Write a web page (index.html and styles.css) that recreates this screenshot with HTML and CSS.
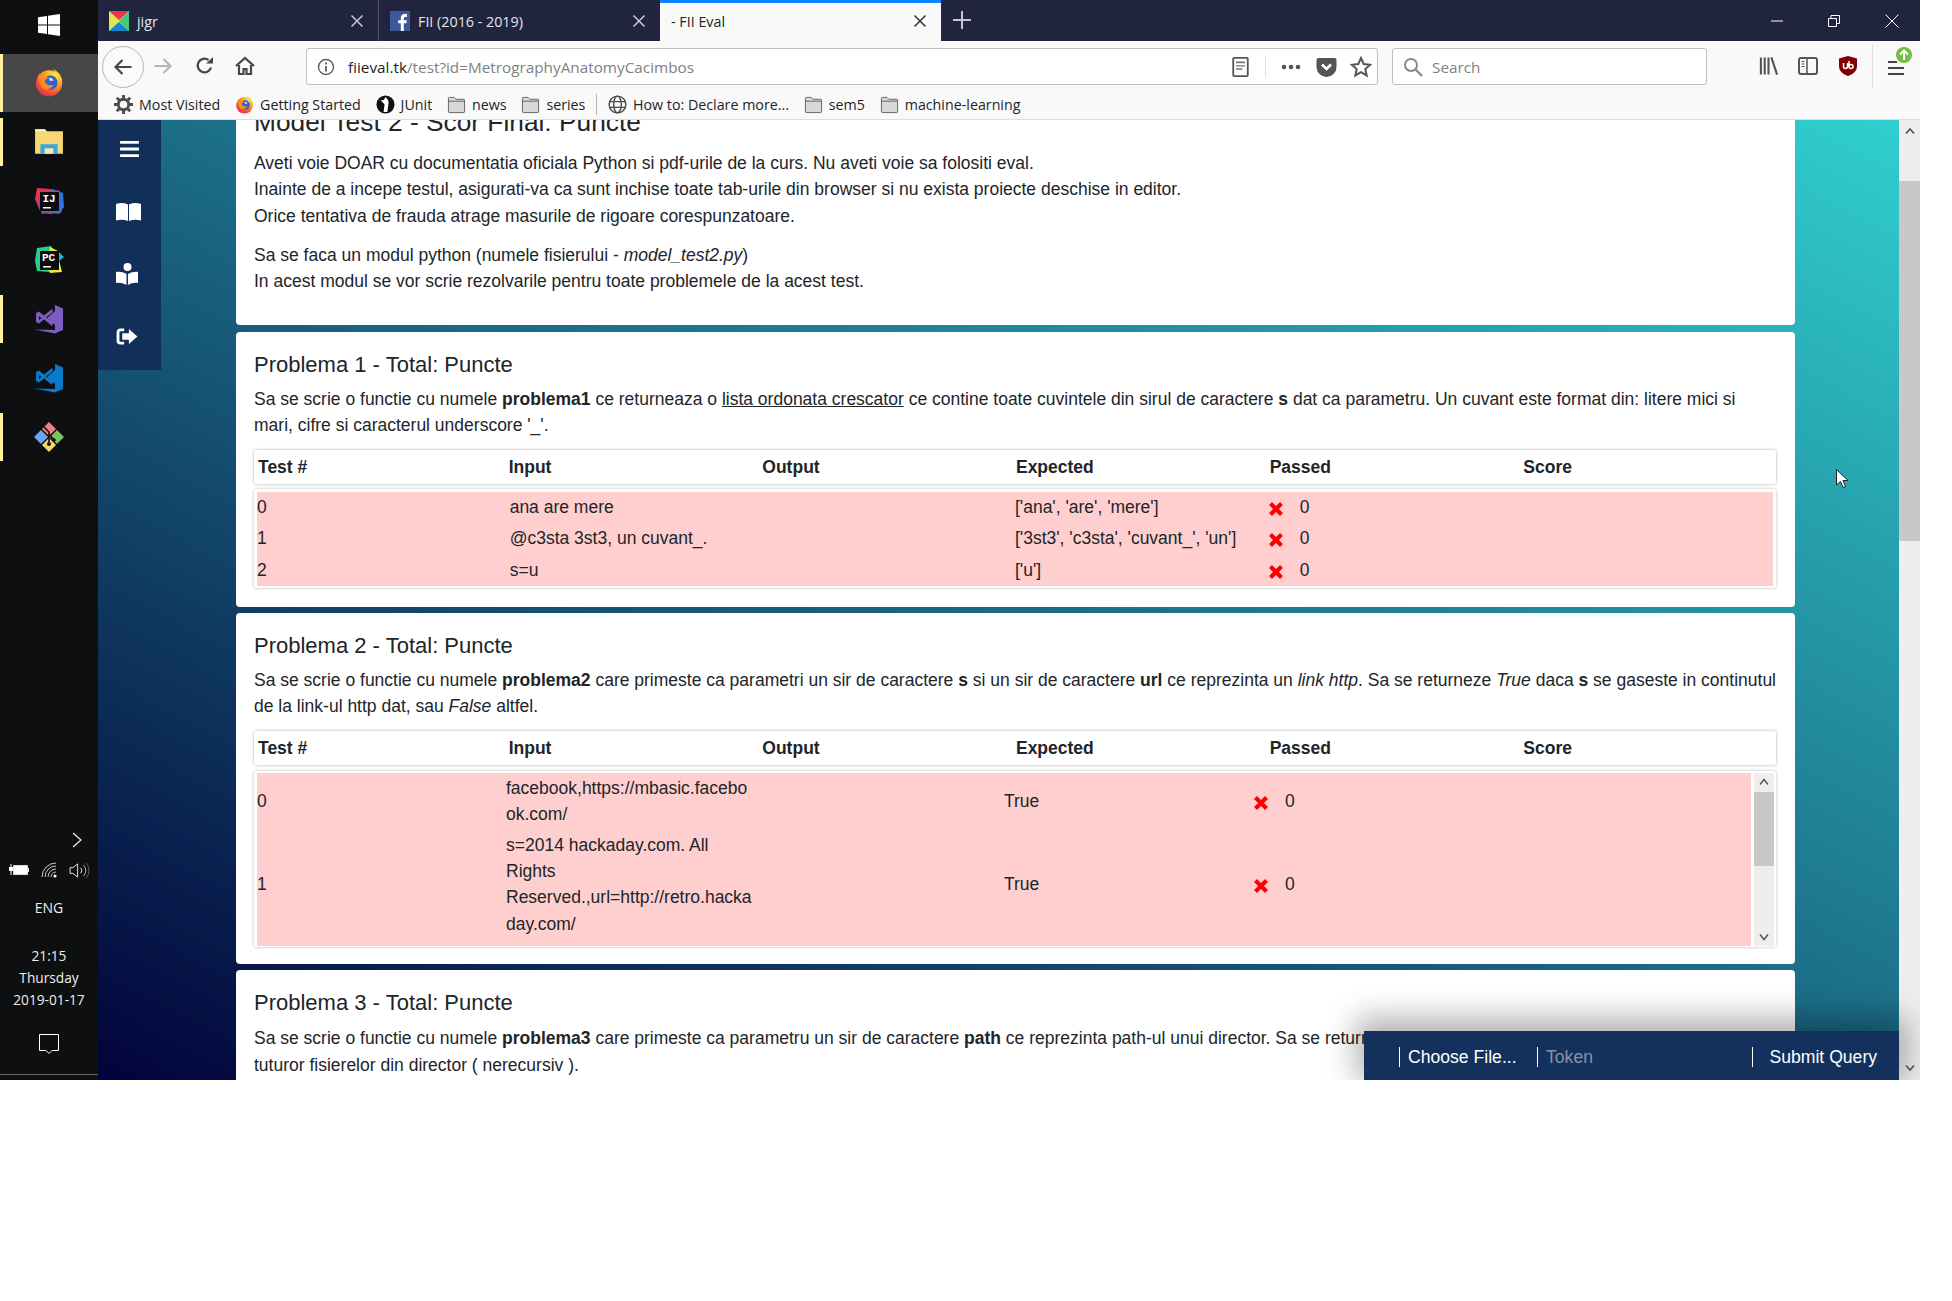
FILE: index.html
```html
<!DOCTYPE html>
<html lang="ro">
<head>
<meta charset="utf-8">
<title>FII Eval</title>
<link rel="stylesheet" href="styles.css">
</head>
<body>
<svg class="defs" width="0" height="0">
  <defs>
    <radialGradient id="ffg" cx="0.75" cy="0.15" r="1">
      <stop offset="0" stop-color="#ffe847"/>
      <stop offset="0.45" stop-color="#ff9a1f"/>
      <stop offset="0.8" stop-color="#f0413a"/>
      <stop offset="1" stop-color="#d92a6b"/>
    </radialGradient>
    <symbol id="firefox" viewBox="0 0 24 24">
      <circle cx="12" cy="13" r="10.5" fill="url(#ffg)"/>
      <path d="M15 1.5c5 2 8 6.500 7.500 12-1-5-4-8-7.500-12z" fill="#ffd02c"/>
      <circle cx="13" cy="12.500" r="5.800" fill="#2c62dd"/>
      <path d="M4 5c2 3 5 2 8 3.500-2 .5-3 1.500-3.500 3 1 2.500 4 4 7 2.500-1 3-4 4.500-7 3.500C5 16.500 3 11 4 5z" fill="#ff8a1e"/>
      <path d="M12 8.500c2 0 3.500 1 3.500 2.500h-3z" fill="#ffe9a8"/>
    </symbol>
    <symbol id="folder" viewBox="0 0 20 20">
      <path d="M1.500 17.500V3.500a1 1 0 0 1 1-1h5l2 2h8a1 1 0 0 1 1 1v12a1 1 0 0 1-1 1h-15a1 1 0 0 1-1-1z" fill="#d8d8d8" stroke="#616161" stroke-width="1"/>
      <path d="M1.500 6.500h17" stroke="#616161" stroke-width="1" fill="none"/>
    </symbol>
    <symbol id="cross" viewBox="0 0 16 16">
      <path d="M2.500 2.500l11 11M13.500 2.500l-11 11" stroke="#ff0000" stroke-width="4.200" fill="none"/>
    </symbol>
    <symbol id="tabclose" viewBox="0 0 14 14">
      <path d="M1.500 1.500l11 11M12.500 1.500l-11 11" stroke="currentColor" stroke-width="1.500" fill="none"/>
    </symbol>
  </defs>
</svg>

<div class="window">
  <aside class="taskbar">
    <div class="start">
      <svg class="ic-win" viewBox="0 0 22 22"><path d="M0 3.200l9-1.300v8.600H0zM10 1.800L22 0v10.500H10zM0 11.500h9v8.600l-9-1.300zM10 11.500h12V22l-12-1.800z" fill="#fff"/></svg>
    </div>
    <div class="tb-item tb-active"><svg class="ic-tb"><use href="#firefox"/></svg></div>
    <div class="tb-item tb-running">
      <svg class="ic-tb" viewBox="0 1 28 28"><path d="M1 3h9l2 2h15v21H1z" fill="#f7d774"/><path d="M1 3h9l2 2H1z" fill="#fff1b8"/><path d="M6 26v-9h16v9h-4v-5h-8v5z" fill="#3aa7e4"/><path d="M10 21h8v5h-8z" fill="#fbe7a4"/></svg>
    </div>
    <div class="tb-item">
      <svg class="ic-tb" viewBox="0 0 30 30"><path d="M3 2l13 1 10 2 3 12-2 10-12 1-9-3-5-12z" fill="#e5324f"/><path d="M18 3l11 4 1 14-5 7-9-2z" fill="#2f74e0"/><path d="M2 15l6 13 8-1-6-9z" fill="#8a4aa8"/><path d="M6 6h19v19H6z" fill="#0b0b0b"/><text class="ide-text" x="8.500" y="16">IJ</text><path d="M9 21h8v1.500H9z" fill="#fff"/></svg>
    </div>
    <div class="tb-item">
      <svg class="ic-tb" viewBox="0 0 30 30"><path d="M3 3l14-2 3 6-5 20-12-1-2-10z" fill="#23d18b"/><path d="M16 2l8 4 5 6-4 3 3 12-12 1-3-6z" fill="#f5e733"/><path d="M23 6l7 6-5 4z" fill="#18b4e8"/><path d="M6 6h19v19H6z" fill="#0b0b0b"/><text class="ide-text" x="8" y="16">PC</text><path d="M9 21h8v1.500H9z" fill="#fff"/></svg>
    </div>
    <div class="tb-item tb-running">
      <svg class="ic-tb" viewBox="0 0 30 30"><path d="M21 1l8 3.500v21.500l-8 3.500L0 25.500l21 .5z" fill="#7c5cbe"/><path d="M21 7v14l-8-7zM2 9l3-1.500 5 4 8-6.500 1 3-7 5.500 7 5.500-1 3-8-6.500-5 4-3-1.500zm3 3v4l2.500-2z" fill="#7c5cbe"/></svg>
    </div>
    <div class="tb-item">
      <svg class="ic-tb" viewBox="0 0 30 30"><path d="M21 1l8 3.500v21.500l-8 3.500L0 25.500l21 .5z" fill="#0b78c8"/><path d="M21 7v14l-8-7zM2 9l3-1.500 5 4 8-6.500 1 3-7 5.500 7 5.500-1 3-8-6.500-5 4-3-1.500zm3 3v4l2.500-2z" fill="#0b78c8"/></svg>
    </div>
    <div class="tb-item tb-running">
      <svg class="ic-tb" viewBox="0 0 30 30"><path d="M15 0l7 7-7 7-7-7z" fill="#f08080"/><path d="M7 8l7 7-7 7-7-7z" fill="#6fa3f7"/><path d="M23 8l7 7-7 7-7-7z" fill="#7cc35a"/><path d="M15 16l7 7-7 7-7-7z" fill="#f5d76e"/><path d="M10 5l5 5v10M15 12l5 6" stroke="#111" stroke-width="1.600" fill="none"/><circle cx="15" cy="22" r="2" fill="#111"/><circle cx="20" cy="18" r="1.800" fill="#111"/></svg>
    </div>

    <div class="tray">
      <svg class="ic-chev" viewBox="0 0 10 16"><path d="M1 1l8 7-8 7" stroke="#eee" stroke-width="1.200" fill="none"/></svg>
      <div class="tray-icons">
        <svg class="ic-batt" viewBox="0 0 20 12"><path d="M4.500 1.500h14v9h-14z" fill="#fff" stroke="#ddd"/><path d="M19 4h1v4h-1z" fill="#fff"/><path d="M0 3h4v4H0zM1.500 0h1v3h-1zM1.500 7h1v4h-1z" fill="#fff"/></svg>
        <svg class="ic-wifi" viewBox="0 0 16 16"><g stroke="#ccc" fill="none"><path d="M1 15A14 14 0 0 1 15 1"/><path d="M4 15A11 11 0 0 1 15 4"/><path d="M7 15a8 8 0 0 1 8-8"/><path d="M10 15a5 5 0 0 1 5-5"/></g><circle cx="14" cy="14" r="1.600" fill="#fff"/></svg>
        <svg class="ic-vol" viewBox="0 0 22 18"><path d="M1 6h3l5-4v14l-5-4H1z" fill="none" stroke="#eee"/><path d="M12 6a4 4 0 0 1 0 6" fill="none" stroke="#eee"/><path d="M15 3a8 8 0 0 1 0 12" fill="none" stroke="#bbb"/><path d="M18 1a12 12 0 0 1 0 16" fill="none" stroke="#666"/></svg>
      </div>
      <div class="tray-lang">ENG</div>
      <div class="tray-clock">21:15<br>Thursday<br>2019-01-17</div>
      <svg class="ic-notif" viewBox="0 0 20 20"><path d="M.5.500h19v16h-6.500L10 19.500l-3-3H.5z" fill="none" stroke="#fff"/></svg>
    </div>
  </aside>

  <div class="browser">
    <div class="tabs">
      <div class="tab tab-sep">
        <svg class="favicon" viewBox="0 0 20 20"><path d="M0 0h20v20H0z" fill="#dde84a"/><path d="M0 0h20L10 9z" fill="#e8344e"/><path d="M20 0v20L10 10z" fill="#3fcb7f"/><path d="M0 20l10-9 10 9z" fill="#1684d8"/></svg>
        <span class="tab-title">jigr</span>
        <svg class="tab-x"><use href="#tabclose"/></svg>
      </div>
      <div class="tab">
        <svg class="favicon" viewBox="0 0 20 20"><path d="M0 0h20v20H0z" fill="#3b5998"/><path d="M13.800 20v-7.700h2.600l.4-3h-3V7.400c0-.9.300-1.500 1.500-1.500H17V3.200c-.3 0-1.200-.1-2.300-.1-2.300 0-3.900 1.400-3.900 4v2.200H8.200v3h2.600V20z" fill="#fff"/></svg>
        <span class="tab-title">FII (2016 - 2019)</span>
        <svg class="tab-x"><use href="#tabclose"/></svg>
      </div>
      <div class="tab tab-active">
        <span class="tab-title">- FII Eval</span>
        <svg class="tab-x"><use href="#tabclose"/></svg>
      </div>
      <svg class="tab-plus" viewBox="0 0 18 18"><path d="M9 0v18M0 9h18" stroke="#c4c5cf" stroke-width="2" fill="none"/></svg>
      <div class="win-ctrls">
        <svg class="wc" viewBox="0 0 12 12"><path d="M0 6h12" stroke="#fff"/></svg>
        <svg class="wc" viewBox="0 0 12 12"><path d="M.5 3.500h8v8h-8zM3 3.500v-3h8.500v8h-3" fill="none" stroke="#fff"/></svg>
        <svg class="wc" viewBox="0 0 14 14"><path d="M.5.500l13 13M13.500.500l-13 13" stroke="#fff"/></svg>
      </div>
    </div>

    <div class="toolbar">
      <div class="back-btn">
        <svg class="ic-arrow" viewBox="0 0 20 20"><path d="M18.500 10H2.500M9.500 3l-7 7 7 7" fill="none" stroke="#464646" stroke-width="2.200"/></svg>
      </div>
      <svg class="ic-nav ic-fwd" viewBox="0 0 20 20"><path d="M1.500 10h16M10.500 3l7 7-7 7" fill="none" stroke="#b5b5b5" stroke-width="2.200"/></svg>
      <svg class="ic-nav ic-reload" viewBox="0 0 20 20"><path d="M16 11.500A6.800 6.800 0 1 1 13.500 4" fill="none" stroke="#464646" stroke-width="2.200"/><path d="M11 7.500h7V1z" fill="#464646"/></svg>
      <svg class="ic-nav ic-home" viewBox="0 0 20 20"><path d="M1 10l9-8 9 8M4 9v9h4.500v-5h3v5H16V9" fill="none" stroke="#464646" stroke-width="2.200"/></svg>
      <div class="urlbar">
        <svg class="ic-info" viewBox="0 0 18 18"><circle cx="9" cy="9" r="7.500" fill="none" stroke="#5f5f5f" stroke-width="1.400"/><path d="M8.100 8h1.800v5.500H8.100zM8.100 4.600h1.800v1.800H8.100z" fill="#5f5f5f"/></svg>
        <span class="url"><span class="url-host">fiieval.tk</span>/test?id=MetrographyAnatomyCacimbos</span>
        <svg class="ic-reader" viewBox="0 0 18 22"><path d="M2 1h14a1 1 0 0 1 1 1v18a1 1 0 0 1-1 1H2a1 1 0 0 1-1-1V2a1 1 0 0 1 1-1z" fill="none" stroke="#555" stroke-width="2"/><path d="M4 5h10v2H4zM4 9h10v1.500H4zM4 12.500h7V14H4z" fill="#777"/></svg>
        <i class="url-sep"></i>
        <svg class="ic-dots" viewBox="0 0 20 6"><circle cx="3" cy="3" r="2.300" fill="#555"/><circle cx="10" cy="3" r="2.300" fill="#555"/><circle cx="17" cy="3" r="2.300" fill="#555"/></svg>
        <svg class="ic-pocket" viewBox="0 0 20 20"><path d="M2 1h16a2 2 0 0 1 2 2v7a10 10 0 0 1-20 0V3a2 2 0 0 1 2-2z" fill="#555"/><path d="M5.500 7.500L10 12l4.500-4.500" fill="none" stroke="#fff" stroke-width="2.600"/></svg>
        <svg class="ic-star" viewBox="0 0 22 22"><path d="M11 2l2.700 6 6.500.7-4.900 4.300 1.400 6.400L11 16.100l-5.700 3.300L6.700 13 1.800 8.700 8.300 8z" fill="none" stroke="#555" stroke-width="2"/></svg>
      </div>
      <div class="searchbar">
        <svg class="ic-search" viewBox="0 0 20 20"><circle cx="8" cy="8" r="6" fill="none" stroke="#8a8a8a" stroke-width="2"/><path d="M12.500 12.500l6.500 6.500" stroke="#8a8a8a" stroke-width="2.400"/></svg>
        <span class="search-text">Search</span>
      </div>
      <div class="tool-right">
        <svg class="ic-lib" viewBox="0 0 20 18"><path d="M2 0v18M6 0v18M10 0v18M13 0l6 18" stroke="#555" stroke-width="2.200" fill="none"/></svg>
        <svg class="ic-side" viewBox="0 0 20 18"><rect x="1" y="1" width="18" height="16" rx="2" fill="none" stroke="#555" stroke-width="2"/><path d="M9 1v16" stroke="#555" stroke-width="1.500"/><path d="M3.500 4.500h3M3.500 7h3M3.500 9.500h3" stroke="#555"/></svg>
        <svg class="ic-ub" viewBox="0 0 18 20"><path d="M9 0l9 2.500V10c0 5-4 8.500-9 10-5-1.500-9-5-9-10V2.500z" fill="#800000"/><path d="M4.500 7v3.500a2 2 0 0 0 4 0V7M10 5v5.500M10 10.500a2 2 0 1 0 4 0 2 2 0 1 0-4 0" fill="none" stroke="#fff" stroke-width="1.500"/></svg>
        <i class="tool-sep"></i>
        <div class="menu-wrap">
          <svg class="ic-menu" viewBox="0 0 16 16"><path d="M0 2h9M0 8h16M0 14h16" stroke="#444" stroke-width="2" fill="none"/></svg>
          <svg class="ic-badge" viewBox="0 0 16 16"><circle cx="8" cy="8" r="8" fill="#72c03f"/><path d="M8 13V4M4 7.500L8 3.500l4 4" fill="none" stroke="#fff" stroke-width="2"/></svg>
        </div>
      </div>
    </div>

    <div class="bookmarks">
      <div class="bm"><svg class="ic-bm" viewBox="0 0 20 20"><circle cx="10" cy="10" r="5.500" fill="none" stroke="#4c4c4c" stroke-width="3"/><path d="M10 0v4M10 16v4M0 10h4M16 10h4M3 3l3 3M14 14l3 3M17 3l-3 3M6 14l-3 3" stroke="#4c4c4c" stroke-width="3"/></svg>Most Visited</div>
      <div class="bm"><svg class="ic-bm"><use href="#firefox"/></svg>Getting Started</div>
      <div class="bm"><svg class="ic-bm" viewBox="0 0 20 20"><circle cx="10" cy="10" r="9.500" fill="#111"/><path d="M10 2c2 2 4 4 3 8l-1 8H8l1-8C8 8 5 7 5 5c2 1 3 1 5-3z" fill="#fff"/></svg>JUnit</div>
      <div class="bm"><svg class="ic-bm"><use href="#folder"/></svg>news</div>
      <div class="bm"><svg class="ic-bm"><use href="#folder"/></svg>series</div>
      <i class="bm-sep"></i>
      <div class="bm"><svg class="ic-bm" viewBox="0 0 20 20"><g fill="none" stroke="#4c4c4c" stroke-width="1.500"><circle cx="10" cy="10" r="8.800"/><ellipse cx="10" cy="10" rx="4" ry="8.800"/><path d="M1.500 7h17M1.500 13h17"/></g></svg>How to: Declare more...</div>
      <div class="bm"><svg class="ic-bm"><use href="#folder"/></svg>sem5</div>
      <div class="bm"><svg class="ic-bm"><use href="#folder"/></svg>machine-learning</div>
    </div>

    <div class="page">
      <main class="viewport">
        <div class="content">
          <section class="card card-intro">
            <h3 class="title-lg">Model Test 2 - Scor Final: Puncte</h3>
            <p class="para-intro">Aveti voie DOAR cu documentatia oficiala Python si pdf-urile de la curs. Nu aveti voie sa folositi eval.<br>
            Inainte de a incepe testul, asigurati-va ca sunt inchise toate tab-urile din browser si nu exista proiecte deschise in editor.<br>
            Orice tentativa de frauda atrage masurile de rigoare corespunzatoare.</p>
            <p class="para-intro">Sa se faca un modul python (numele fisierului - <em>model_test2.py</em>)<br>
            In acest modul se vor scrie rezolvarile pentru toate problemele de la acest test.</p>
          </section>

          <section class="card">
            <h4 class="title">Problema 1 - Total: Puncte</h4>
            <p class="para">Sa se scrie o functie cu numele <strong>problema1</strong> ce returneaza o <u>lista ordonata crescator</u> ce contine toate cuvintele din sirul de caractere <strong>s</strong> dat ca parametru. Un cuvant este format din: litere mici si mari, cifre si caracterul underscore '_'.</p>
            <table class="thead">
              <tr><th>Test #</th><th>Input</th><th>Output</th><th>Expected</th><th>Passed</th><th>Score</th></tr>
            </table>
            <div class="tbody-box">
              <table class="rows rows-a">
                <tr><td>0</td><td>ana are mere</td><td></td><td>['ana', 'are', 'mere']</td><td><svg class="ic-x"><use href="#cross"/></svg>0</td><td></td></tr>
                <tr><td>1</td><td>@c3sta 3st3, un cuvant_.</td><td></td><td>['3st3', 'c3sta', 'cuvant_', 'un']</td><td><svg class="ic-x"><use href="#cross"/></svg>0</td><td></td></tr>
                <tr><td>2</td><td>s=u</td><td></td><td>['u']</td><td><svg class="ic-x"><use href="#cross"/></svg>0</td><td></td></tr>
              </table>
            </div>
          </section>

          <section class="card">
            <h4 class="title">Problema 2 - Total: Puncte</h4>
            <p class="para">Sa se scrie o functie cu numele <strong>problema2</strong> care primeste ca parametri un sir de caractere <strong>s</strong> si un sir de caractere <strong>url</strong> ce reprezinta un <em>link http</em>. Sa se returneze <em>True</em> daca <strong>s</strong> se gaseste in continutul de la link-ul http dat, sau <em>False</em> altfel.</p>
            <table class="thead">
              <tr><th>Test #</th><th>Input</th><th>Output</th><th>Expected</th><th>Passed</th><th>Score</th></tr>
            </table>
            <div class="tbody-box tbody-scroll">
              <div class="rows-clip">
                <table class="rows rows-b">
                  <tr><td>0</td><td>facebook,https://mbasic.facebook.com/</td><td></td><td>True</td><td><svg class="ic-x"><use href="#cross"/></svg>0</td><td></td></tr>
                  <tr><td>1</td><td>s=2014 hackaday.com. All Rights Reserved.,url=http://retro.hackaday.com/</td><td></td><td>True</td><td><svg class="ic-x"><use href="#cross"/></svg>0</td><td></td></tr>
                </table>
              </div>
              <div class="mini-scroll">
                <svg class="mini-arrow" viewBox="0 0 10 8"><path d="M1 6.500l4-5 4 5" fill="none" stroke="#555" stroke-width="1.500"/></svg>
                <div class="mini-thumb"></div>
                <svg class="mini-arrow mini-down" viewBox="0 0 10 8"><path d="M1 1.500l4 5 4-5" fill="none" stroke="#555" stroke-width="1.500"/></svg>
              </div>
            </div>
          </section>

          <section class="card card-last">
            <h4 class="title">Problema 3 - Total: Puncte</h4>
            <p class="para">Sa se scrie o functie cu numele <strong>problema3</strong> care primeste ca parametru un sir de caractere <strong>path</strong> ce reprezinta path-ul unui director. Sa se returneze o lista ordonata crescator cu numele<br>tuturor fisierelor din director ( nerecursiv ).</p>
          </section>
        </div>
      </main>

      <div class="scrollbar">
        <svg class="sb-arrow" viewBox="0 0 10 8"><path d="M1 6.500l4-4.500 4 4.500" fill="none" stroke="#555" stroke-width="1.800"/></svg>
        <div class="sb-thumb"></div>
        <svg class="sb-arrow sb-down" viewBox="0 0 10 8"><path d="M1 1.500l4 4.500 4-4.500" fill="none" stroke="#555" stroke-width="1.500"/></svg>
      </div>

      <nav class="sidenav">
        <svg class="sn-bars" viewBox="0 0 20 17"><path d="M0 0h20v3H0zM0 7h20v3H0zM0 14h20v3H0z" fill="#fff"/></svg>
        <svg class="sn-book" viewBox="0 0 25 18"><path d="M0 1c4-1.300 8-1.300 12 .5V18c-4-1.500-8-1.500-12-.5zM13 1.500c4-1.800 8-1.800 12-.5v16.500c-4-1-8-1-12 .5z" fill="#fff"/></svg>
        <svg class="sn-reader" viewBox="0 0 22 22"><circle cx="11.500" cy="4" r="4" fill="#fff"/><path d="M0 9c4-.5 7 0 10.500 2v11C7 20 4 19.500 0 20zM12 11c3.500-2 7-2.500 10-2v11c-3-.5-6.500 0-10 2z" fill="#fff"/></svg>
        <svg class="sn-out" viewBox="0 0 22 18"><path d="M8 2H4a2.500 2.500 0 0 0-2.500 2.500v9A2.500 2.500 0 0 0 4 16h4" fill="none" stroke="#fff" stroke-width="3"/><path d="M13 1l9 8-9 8v-4.500H6v-7h7z" fill="#fff"/></svg>
      </nav>

      <form class="submit-bar">
        <span class="sb-item sb-file">Choose File...</span>
        <span class="sb-item sb-token">Token</span>
        <span class="sb-item sb-submit">Submit Query</span>
      </form>

      <svg class="cursor" viewBox="0 0 12 19"><path d="M.5.500v15.500l4-3.500 2.500 6 2.500-1-2.500-6h5z" fill="#fff" stroke="#222"/></svg>
    </div>
  </div>
</div>
</body>
</html>
```
FILE: styles.css
```css
* { box-sizing: border-box; }
html, body { margin: 0; padding: 0; background: #fff; }
body { width: 1952px; height: 1301px; overflow: hidden; font-family: "Liberation Sans", Arial, sans-serif; }
.defs { position: absolute; }

.window { width: 1920px; height: 1080px; display: flex; overflow: hidden; }

/* Windows taskbar */
.taskbar { width: 98px; flex: none; background: #0e0f10; display: flex; flex-direction: column; font-family: "Open Sans", sans-serif; color: #eee; }
.start { height: 54px; display: flex; align-items: center; justify-content: center; }
.ic-win { width: 22px; height: 22px; margin-top: -4px; }
.tb-item { height: 59px; display: flex; align-items: center; justify-content: center; position: relative; }
.ic-tb { width: 30px; height: 30px; margin-top: -2px; }
.tb-active { background: #474747; height: 58px; margin-bottom: 1px; }
.tb-active::before, .tb-running::before { content: ""; position: absolute; left: 0; width: 3px; background: #fff29e; }
.tb-active::before { top: 0; bottom: 0; }
.tb-running::before { top: 5px; bottom: 6px; }
.tray { margin-top: auto; display: flex; flex-direction: column; align-items: center; height: 248px; border-bottom: 0; position: relative; }
.ic-chev { width: 10px; height: 16px; margin: 0 0 0 56px; flex: none; }
.tray-icons { display: flex; align-items: center; gap: 12px; margin-top: 13px; height: 18px; }
.ic-batt { width: 20px; height: 12px; }
.ic-wifi { width: 16px; height: 16px; }
.ic-vol { width: 21px; height: 17px; }
.tray-lang { font-size: 14px; line-height: 20px; margin-top: 19px; }
.tray-clock { font-size: 13.700px; line-height: 22px; text-align: center; margin-top: 27px; }
.ic-notif { width: 20px; height: 20px; margin-top: 23px; flex: none; }
.tray::after { content: ""; position: absolute; left: 0; right: 0; bottom: 5px; height: 1px; background: #6a6a6a; }

/* Browser chrome */
.browser { flex: 1; min-width: 0; display: flex; flex-direction: column; font-family: "Open Sans", sans-serif; }
.tabs { height: 41px; background: #20243f; display: flex; align-items: stretch; flex: none; }
.tab { width: 281px; display: flex; align-items: center; padding: 0 14px 0 11px; color: #e6e6ea; font-size: 14.300px; position: relative; }
.tab-sep { border-right: 1px solid #50536b; }
.favicon { width: 20px; height: 20px; margin-right: 8px; flex: none; }
.tab-title { flex: 1; white-space: nowrap; margin-top: 1px; }
.tab-x { width: 14px; height: 14px; color: #c9cad3; flex: none; }
.tab-active { background: #f9f9fa; color: #222; border-top: 3px solid #0a84ff; }
.tab-active .tab-title { margin-top: -1px; }
.tab-active .tab-x { color: #333; margin-top: -3px; }
.tab-plus { width: 18px; height: 18px; margin: 11px 0 0 12px; }
.win-ctrls { margin-left: auto; display: flex; gap: 45px; align-items: center; padding-right: 21px; }
.wc { width: 12px; height: 12px; }
.wc:last-child { width: 14px; height: 14px; }

.toolbar { height: 40px; background: #f9f9fa; display: flex; align-items: center; padding-left: 4px; flex: none; position: relative; z-index: 1; }
.back-btn { width: 42px; height: 42px; border-radius: 50%; border: 1px solid #b8b8b8; display: flex; align-items: center; justify-content: center; background: #fbfbfb; margin-top: 11px; flex: none; }
.ic-arrow { width: 20px; height: 20px; flex: none; }
.ic-nav { width: 20px; height: 20px; flex: none; margin-top: 10px; }
.ic-fwd { margin-left: 9px; }
.ic-reload { margin-left: 22px; }
.ic-home { margin-left: 20px; }
.urlbar { width: 1072px; height: 37px; margin-left: 51px; margin-top: 11px; background: #fff; border: 1px solid #bfbfbf; border-radius: 3px; display: flex; align-items: center; padding-left: 10px; flex: none; }
.ic-info { width: 18px; height: 18px; flex: none; }
.url { margin-left: 13px; font-size: 15.300px; color: #808080; flex: 1; white-space: nowrap; }
.url-host { color: #1e1e1e; }
.ic-reader { width: 17px; height: 20px; flex: none; margin-right: 16px; }
.url-sep { width: 1px; height: 22px; background: #e2e2e2; margin-right: 15px; }
.ic-dots { width: 20px; height: 6px; margin-right: 15px; }
.ic-pocket { width: 21px; height: 20px; margin-right: 13px; }
.ic-star { width: 22px; height: 22px; margin-right: 5px; }
.searchbar { width: 315px; height: 37px; margin-left: 14px; margin-top: 11px; background: #fff; border: 1px solid #bfbfbf; border-radius: 3px; display: flex; align-items: center; padding-left: 10px; flex: none; }
.ic-search { width: 20px; height: 20px; flex: none; }
.search-text { margin-left: 9px; font-size: 15.300px; color: #7f7f7f; }
.tool-right { display: flex; align-items: center; margin-left: 52px; margin-top: 10px; }
.ic-lib { width: 19px; height: 18px; }
.ic-side { width: 20px; height: 18px; margin-left: 20px; }
.ic-ub { width: 18px; height: 20px; margin-left: 21px; }
.tool-sep { width: 1px; height: 42px; background: #dcdcdc; margin-left: 15px; }
.menu-wrap { position: relative; margin-left: 15px; width: 16px; height: 16px; margin-top: 4px; }
.ic-menu { width: 16px; height: 16px; display: block; }
.ic-badge { position: absolute; width: 16px; height: 16px; top: -13px; left: 8px; }

.bookmarks { height: 39px; background: #f9f9fa; border-bottom: 1px solid #dedede; display: flex; align-items: center; padding: 8px 0 0 16px; gap: 14.800px; font-size: 14.250px; color: #1f1f1f; flex: none; white-space: nowrap; }
.bm { display: flex; align-items: center; gap: 6px; }
.ic-bm { width: 19px; height: 19px; flex: none; }
.bm-sep { width: 1px; height: 21px; background: #b5b5b5; margin: 0 -4px; }

/* Page */
.page { flex: 1; min-height: 0; display: flex; position: relative; overflow: hidden; }
.viewport { flex: 1; min-width: 0; overflow: hidden; background: linear-gradient(to top right, #02033a 0%, #1b6a85 50%, #30cfd0 100%); font-family: "Liberation Sans", Arial, sans-serif; font-size: 17.500px; color: #212529; }
.content { margin: -31px 104px 0 138px; }
.card { background: #fff; border-radius: 4px; padding: 20px 18px 19px; margin-bottom: 6.500px; }
.card-intro { padding-top: 18px; padding-bottom: 18px; }
.card-last .para { padding-top: 1px; }
.title-lg { font-size: 26.300px; line-height: 31px; font-weight: 400; margin: 0 0 12px; }
.title { font-size: 22px; line-height: 26px; font-weight: 400; margin: 0 0 8px; }
.para-intro { margin: 0 0 12.600px; line-height: 26.400px; }
.para { margin: 0 0 11px; line-height: 26.400px; }
.thead { width: 1522px; height: 34px; table-layout: fixed; border-collapse: collapse; background: #fff; box-shadow: 0 0 3px rgba(0,0,0,.35); border-radius: 2px; }
.thead th { text-align: left; font-weight: 700; padding: 0 0 0 1px; line-height: 26px; }
.thead th:first-child { padding-left: 4px; }
.tbody-box { width: 1522px; margin-top: 5px; padding: 3px 3px 2px; box-shadow: 0 0 3px rgba(0,0,0,.3); border-radius: 2px; }
.tbody-scroll { display: flex; height: 176px; padding: 2px 2px 1px 3px; margin-top: 6px; margin-bottom: -2px; }
.rows { width: 100%; table-layout: fixed; border-collapse: collapse; background: #ffcfcf; }
.rows td { padding: 0; line-height: 26.400px; vertical-align: middle; overflow-wrap: break-word; }
.rows-a td { height: 31.330px; }
.rows-b td { padding: 2px 0; }
.rows-clip { flex: 1; min-width: 0; overflow: hidden; margin-right: 3px; background: #ffcfcf; }
.ic-x { width: 16px; height: 16px; vertical-align: -4px; margin-right: 16px; }
.mini-scroll { width: 20px; flex: none; background: #eee; display: flex; flex-direction: column; align-items: center; }
.mini-arrow { width: 10px; height: 8px; margin: 5px 0; flex: none; }
.mini-thumb { width: 100%; height: 74px; background: #c8c8c8; margin-top: 1px; }
.mini-down { margin-top: auto; }

.scrollbar { width: 21px; flex: none; background: #eee; display: flex; flex-direction: column; align-items: center; }
.sb-arrow { width: 10px; height: 8px; margin: 7px 0 6px; flex: none; }
.sb-thumb { width: 100%; height: 360px; background: #c8c8c8; margin-top: 40px; }
.sb-down { margin-top: auto; margin-bottom: 8px; }

.sidenav { position: absolute; left: 0; top: 0; width: 63px; height: 250px; background: #122f5a; display: flex; flex-direction: column; }
.sidenav svg { display: block; flex: none; }
.sn-bars { width: 19px; height: 16px; margin: 21px 0 0 22px; }
.sn-book { width: 25px; height: 18px; margin: 46px 0 0 18px; }
.sn-reader { width: 22px; height: 22px; margin: 42px 0 0 18px; }
.sn-out { width: 22px; height: 17px; margin: 43px 0 0 18px; }

.submit-bar { position: absolute; right: 21px; bottom: 0; width: 535px; height: 49px; background: #13315c; box-shadow: 0 -6px 30px 8px rgba(0,0,0,.3); display: flex; align-items: center; color: #fff; font-family: "Liberation Sans", Arial, sans-serif; font-size: 17.600px; padding: 2px 0 0 35px; }
.sb-item { border-left: 1px solid #fff; height: 20px; line-height: 20px; padding-left: 8px; white-space: nowrap; }
.sb-file { width: 138px; }
.sb-token { width: 214.500px; color: #8792a8; }
.sb-submit { padding-left: 17px; }
.cursor { position: absolute; left: 1738px; top: 349px; width: 12px; height: 19px; }
.ide-text { font-family: "Liberation Mono", monospace; font-weight: 700; font-size: 11px; fill: #fff; }
```
